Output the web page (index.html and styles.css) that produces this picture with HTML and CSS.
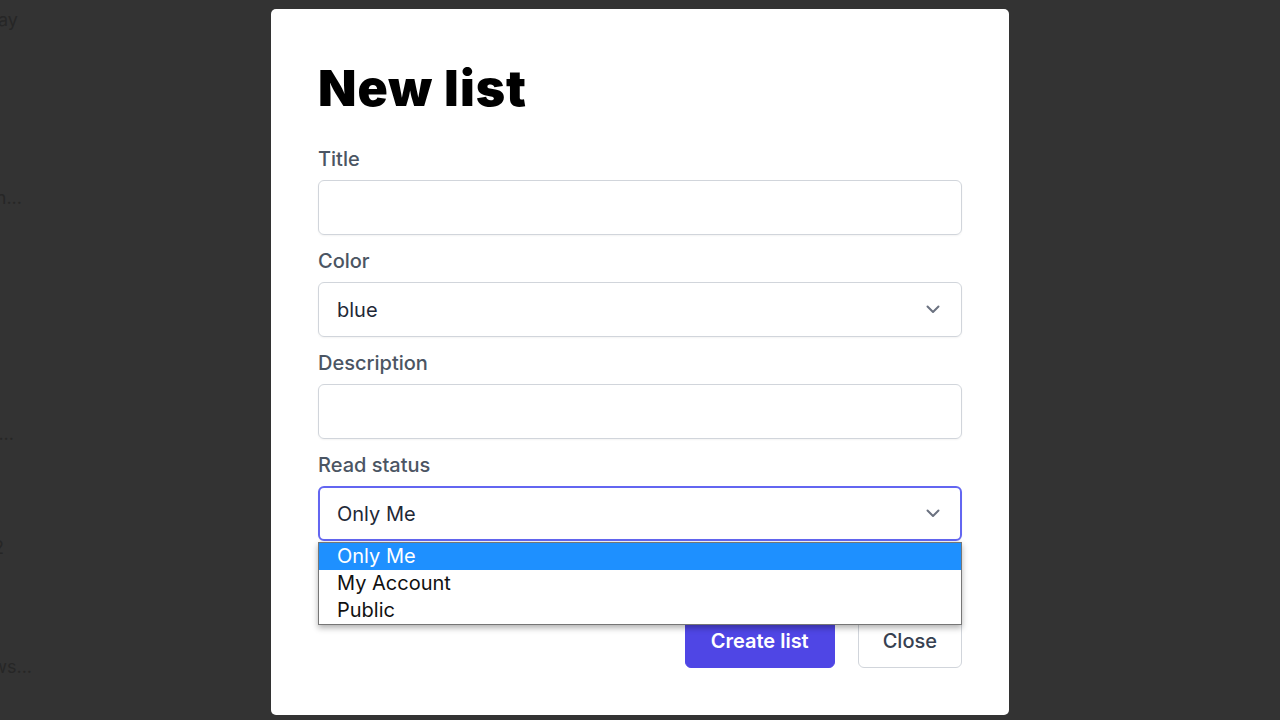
FILE: index.html
```html
<!DOCTYPE html>
<html>
<head>
	<meta http-equiv="Content-Type" content="text/html; charset=UTF-8">
	<title>New list</title>
	<link rel="stylesheet" href="styles.css">
</head>
<body>

<div class="behind">
	<div class="behind-item w-today"><span>Today</span></div>
	<div class="behind-item w-design"><span>Design system plan...</span></div>
	<div class="behind-item w-notes"><span>Meeting notes...</span></div>
	<div class="behind-item w-two"><span>Week 2</span></div>
	<div class="behind-item w-reviews"><span>Book reviews...</span></div>
</div>

<div class="overlay">
	<div class="modal">
		<h1>New list</h1>

		<div class="field">
			<label>Title</label>
			<div class="input"></div>
		</div>

		<div class="field">
			<label>Color</label>
			<div class="input select">
				<span>blue</span>
				<svg class="chevron" width="14" height="9" viewBox="0 0 14 9"><path d="M1.5 1.5 L7 7 L12.5 1.5" fill="none" stroke="#6b7280" stroke-width="2" stroke-linecap="round" stroke-linejoin="round"/></svg>
			</div>
		</div>

		<div class="field">
			<label>Description</label>
			<div class="input"></div>
		</div>

		<div class="field">
			<label>Read status</label>
			<div class="input select focused">
				<span>Only Me</span>
				<svg class="chevron" width="14" height="9" viewBox="0 0 14 9"><path d="M1.5 1.5 L7 7 L12.5 1.5" fill="none" stroke="#6b7280" stroke-width="2" stroke-linecap="round" stroke-linejoin="round"/></svg>
				<div class="dropdown">
					<div class="option active">Only Me</div>
					<div class="option">My Account</div>
					<div class="option">Public</div>
				</div>
			</div>
		</div>

		<div class="actions">
			<button class="btn primary">Create list</button>
			<button class="btn">Close</button>
		</div>
	</div>
</div>

</body>
</html>
```

FILE: styles.css
```css
html, body { margin: 0; padding: 0; height: 100%; }
body { background: #333; font-family: Inter, "Noto Sans", sans-serif; overflow: hidden; }

.behind { padding-top: 8px; }
.behind-item { display: flex; justify-content: flex-end; overflow: hidden; font-size: 18px; line-height: 24px; color: #262626; white-space: nowrap; }
.w-today { width: 18px; margin-bottom: 154px; }
.w-design { width: 22px; margin-bottom: 212px; }
.w-notes { width: 14px; margin-bottom: 90px; }
.w-two { width: 4px; margin-bottom: 95px; }
.w-reviews { width: 32px; }

.overlay { position: fixed; inset: 0; display: flex; justify-content: center; align-items: flex-start; padding-top: 9px; }
.modal { width: 644px; background: #fff; border-radius: 5px; padding: 54px 47px 47px; }

h1 { margin: 0 0 32px; font-size: 50px; line-height: 1; font-weight: 900; letter-spacing: 1px; color: #000; }

.field { margin-bottom: 12px; }
label { display: block; font-size: 20px; line-height: 28px; font-weight: 500; color: #4b5563; margin-bottom: 7px; }

.input { height: 53px; border: 1px solid #d1d5db; border-radius: 6px; box-shadow: 0 1px 2px rgba(0,0,0,0.05); box-sizing: content-box; }
.select { position: relative; display: flex; align-items: center; justify-content: space-between; padding: 0 21px 0 18px; font-size: 20px; color: #1f2937; }
.focused { border: 2px solid #6366f1; height: 51px; padding-left: 17px; padding-right: 20px; }

.dropdown { position: absolute; left: -2px; right: -2px; top: 54px; background: #fff; border: 1px solid #767676; box-shadow: 0 3px 6px rgba(0,0,0,0.3); z-index: 2; }
.option { font-size: 20px; line-height: 27px; padding-left: 18px; color: #111; }
.option.active { background: #1e90ff; color: #fff; }

.actions { display: flex; justify-content: flex-end; gap: 23px; margin-top: 72px; }
.btn { height: 55px; padding: 0 24px; font-family: Inter, sans-serif; font-size: 20px; font-weight: 500; color: #374151; background: #fff; border: 1px solid #d1d5db; border-radius: 6px; }
.btn.primary { padding: 0 25px; background: #4f46e5; border-color: #4f46e5; color: #fff; font-weight: 600; }
```
